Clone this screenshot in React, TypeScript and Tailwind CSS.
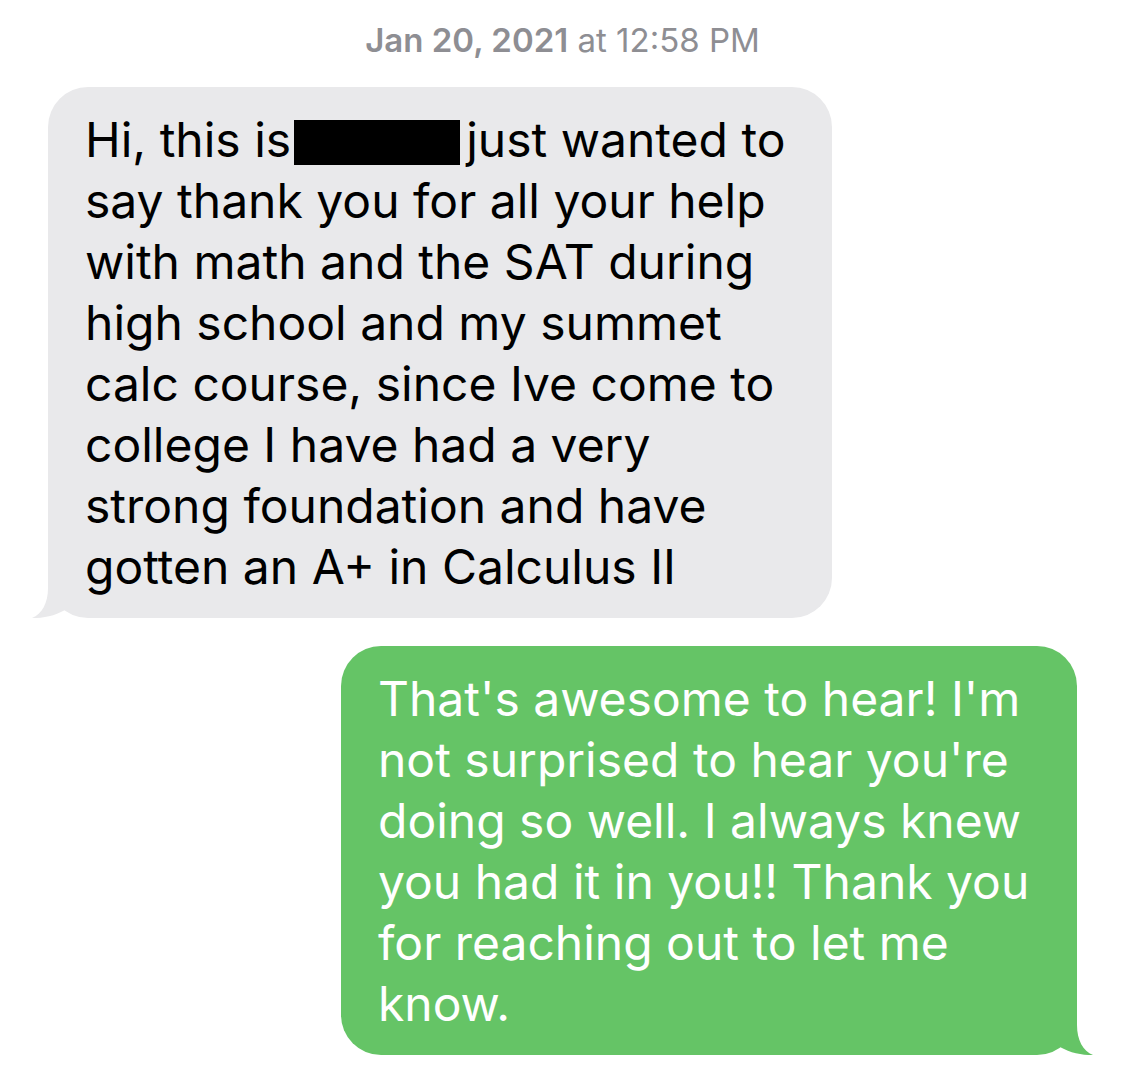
import React from 'react'

const grayLines = [
  'say thank you for all your help',
  'with math and the SAT during',
  'high school and my summet',
  'calc course, since Ive come to',
  'college I have had a very',
  'strong foundation and have',
  'gotten an A+ in Calculus II',
]

const greenLines = [
  "That's awesome to hear! I'm",
  "not surprised to hear you're",
  'doing so well. I always knew',
  'you had it in you!! Thank you',
  'for reaching out to let me',
  'know.',
]

const Tail = ({ fill, flip }: { fill: string; flip?: boolean }) => (
  <svg
    width="40"
    height="40"
    viewBox="0 0 40 40"
    className={flip ? 'absolute -right-[16px] bottom-0 -scale-x-100' : 'absolute -left-[16px] bottom-0'}
  >
    <path d="M16 0 L16 10 C16 25 10 36 0 40 C12 40.5 26 37 36 30 L36 0 Z" fill={fill} />
  </svg>
)

export default function App() {
  return (
    <div className="w-[1125px] h-[1090px] bg-white font-['Inter',sans-serif] overflow-hidden">
      <div className="pt-[20px] text-center text-[33px] leading-[40px] text-[#8e8e93]">
        <span className="font-semibold">Jan 20, 2021</span> at 12:58 PM
      </div>

      <div className="mt-[27px] ml-[48px] relative w-[784px] bg-[#e9e9eb] rounded-[40px] pl-[37px] pt-[22px] pb-[21px] text-black text-[48px] leading-[61px]">
        <Tail fill="#e9e9eb" />
        <div className="relative">
          Hi, this is
          <span className="inline-block align-[-8px] ml-[3px] w-[166px] h-[45px] bg-black" />
          <span className="ml-[6px]">just wanted to</span>
        </div>
        {grayLines.map((l) => (
          <div key={l} className="relative">
            {l}
          </div>
        ))}
      </div>

      <div className="mt-[28px] ml-auto mr-[48px] relative w-[736px] bg-[#65c466] rounded-[40px] pl-[37px] pt-[22px] pb-[21px] text-white text-[48px] leading-[61px]">
        <Tail fill="#65c466" flip />
        {greenLines.map((l) => (
          <div key={l} className="relative">
            {l}
          </div>
        ))}
      </div>
    </div>
  )
}
